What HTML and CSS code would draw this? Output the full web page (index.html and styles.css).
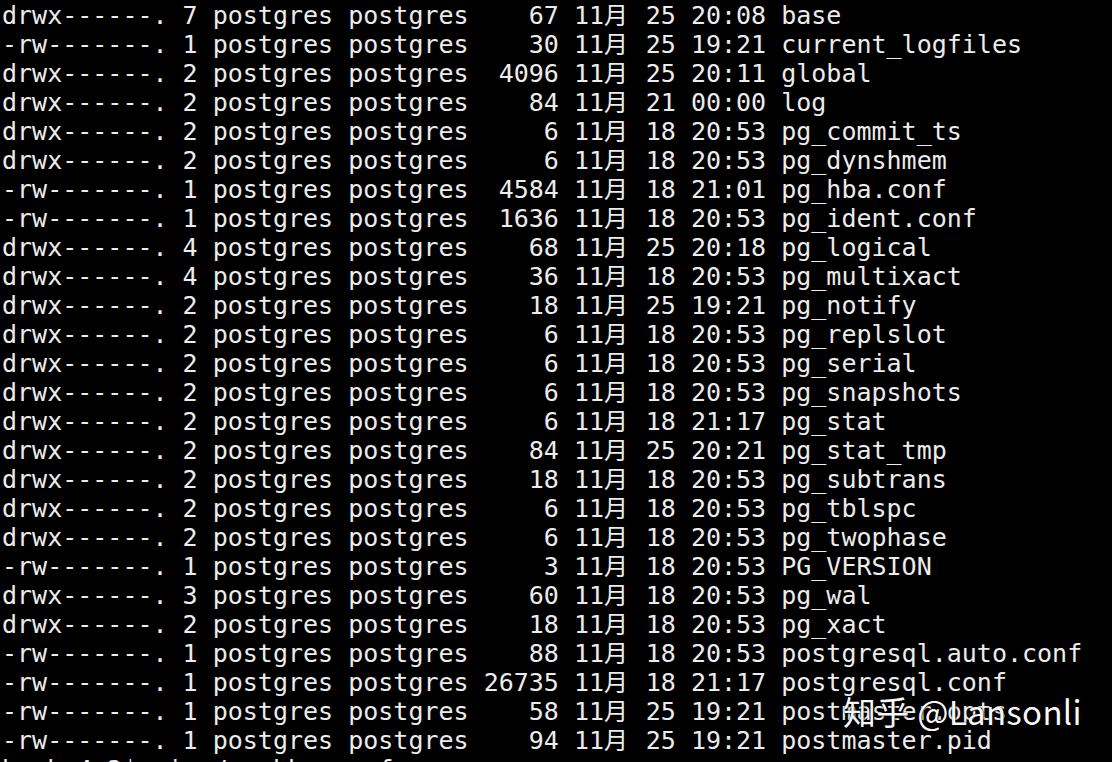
FILE: index.html
```html
<!DOCTYPE html>
<html lang="zh-CN">
<head>
<meta charset="utf-8">
<title>ls -l</title>
<link rel="stylesheet" href="styles.css">
</head>
<body>
<div class="screen">
<pre class="term">drwx------. 7 postgres postgres    67 11<span class="wide">月</span> 25 20:08 base
-rw-------. 1 postgres postgres    30 11<span class="wide">月</span> 25 19:21 current_logfiles
drwx------. 2 postgres postgres  4096 11<span class="wide">月</span> 25 20:11 global
drwx------. 2 postgres postgres    84 11<span class="wide">月</span> 21 00:00 log
drwx------. 2 postgres postgres     6 11<span class="wide">月</span> 18 20:53 pg_commit_ts
drwx------. 2 postgres postgres     6 11<span class="wide">月</span> 18 20:53 pg_dynshmem
-rw-------. 1 postgres postgres  4584 11<span class="wide">月</span> 18 21:01 pg_hba.conf
-rw-------. 1 postgres postgres  1636 11<span class="wide">月</span> 18 20:53 pg_ident.conf
drwx------. 4 postgres postgres    68 11<span class="wide">月</span> 25 20:18 pg_logical
drwx------. 4 postgres postgres    36 11<span class="wide">月</span> 18 20:53 pg_multixact
drwx------. 2 postgres postgres    18 11<span class="wide">月</span> 25 19:21 pg_notify
drwx------. 2 postgres postgres     6 11<span class="wide">月</span> 18 20:53 pg_replslot
drwx------. 2 postgres postgres     6 11<span class="wide">月</span> 18 20:53 pg_serial
drwx------. 2 postgres postgres     6 11<span class="wide">月</span> 18 20:53 pg_snapshots
drwx------. 2 postgres postgres     6 11<span class="wide">月</span> 18 21:17 pg_stat
drwx------. 2 postgres postgres    84 11<span class="wide">月</span> 25 20:21 pg_stat_tmp
drwx------. 2 postgres postgres    18 11<span class="wide">月</span> 18 20:53 pg_subtrans
drwx------. 2 postgres postgres     6 11<span class="wide">月</span> 18 20:53 pg_tblspc
drwx------. 2 postgres postgres     6 11<span class="wide">月</span> 18 20:53 pg_twophase
-rw-------. 1 postgres postgres     3 11<span class="wide">月</span> 18 20:53 PG_VERSION
drwx------. 3 postgres postgres    60 11<span class="wide">月</span> 18 20:53 pg_wal
drwx------. 2 postgres postgres    18 11<span class="wide">月</span> 18 20:53 pg_xact
-rw-------. 1 postgres postgres    88 11<span class="wide">月</span> 18 20:53 postgresql.auto.conf
-rw-------. 1 postgres postgres 26735 11<span class="wide">月</span> 18 21:17 postgresql.conf
-rw-------. 1 postgres postgres    58 11<span class="wide">月</span> 25 19:21 postmaster.opts
-rw-------. 1 postgres postgres    94 11<span class="wide">月</span> 25 19:21 postmaster.pid
bash-4.2$ vi ./pg_hba.conf</pre>
<div class="watermark">知乎 @Lansonli</div>
</div>
</body>
</html>
```

FILE: styles.css
```css
html, body {
  margin: 0;
  padding: 0;
  background: #000;
  overflow: hidden;
}

.screen {
  position: relative;
  width: 1112px;
  height: 762px;
  overflow: hidden;
  background: #000;
}

.term {
  margin: 0;
  padding: 1px 0 0 2px;
  font-family: "DejaVu Sans Mono", "Noto Sans CJK SC", monospace;
  font-size: 25px;
  line-height: 28.98px;
  color: #ececec;
  white-space: pre;
}

.wide {
  display: inline-block;
  width: 2ch;
  text-align: left;
  font-family: "Noto Sans CJK SC", sans-serif;
  font-size: 24px;
  line-height: 1;
}

.watermark {
  position: absolute;
  left: 843px;
  top: 690px;
  font-family: "Noto Sans CJK SC", "Noto Sans", sans-serif;
  font-size: 33px;
  line-height: 42px;
  letter-spacing: 0.3px;
  color: rgba(255, 255, 255, 0.97);
  text-shadow: 0 0 2px rgba(0, 0, 0, 0.7), 1px 1px 2px rgba(0, 0, 0, 0.6);
  white-space: nowrap;
}
```
